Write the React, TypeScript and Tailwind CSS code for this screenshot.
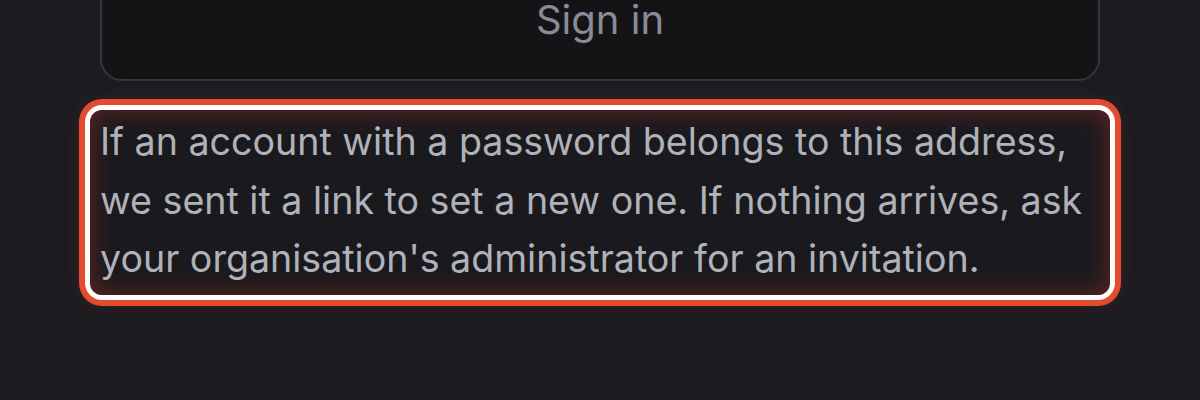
import React from "react";

export default function App() {
  return (
    <div
      className="w-[1200px] h-[400px] overflow-hidden bg-[#1c1c20] px-[100px]"
      style={{ fontFamily: "Inter, 'Noto Sans', sans-serif" }}
    >
      <button className="w-full h-[122px] -mt-[41px] flex items-center justify-center rounded-[22px] border-2 border-[#35353b] bg-[#141417] text-[40px] text-[#8b8b95]">
        Sign in
      </button>
      <div className="mt-[29px] -mx-[10px] rounded-[12px] bg-[#1a1a1e] px-[10px] pt-[3px] pb-[6px] shadow-[inset_0_0_26px_rgba(150,45,35,0.6),0_0_0_5px_#ffffff,0_0_0_11px_#e34a2e,0_0_18px_8px_rgba(200,60,40,0.22)]">
        <p className="text-[37.6px] leading-[58.5px] text-[#b0b2ba]">
          If an account with a password belongs to this address, we sent it a link to set a new one. If nothing arrives, ask your organisation's administrator for an invitation.
        </p>
      </div>
    </div>
  );
}
